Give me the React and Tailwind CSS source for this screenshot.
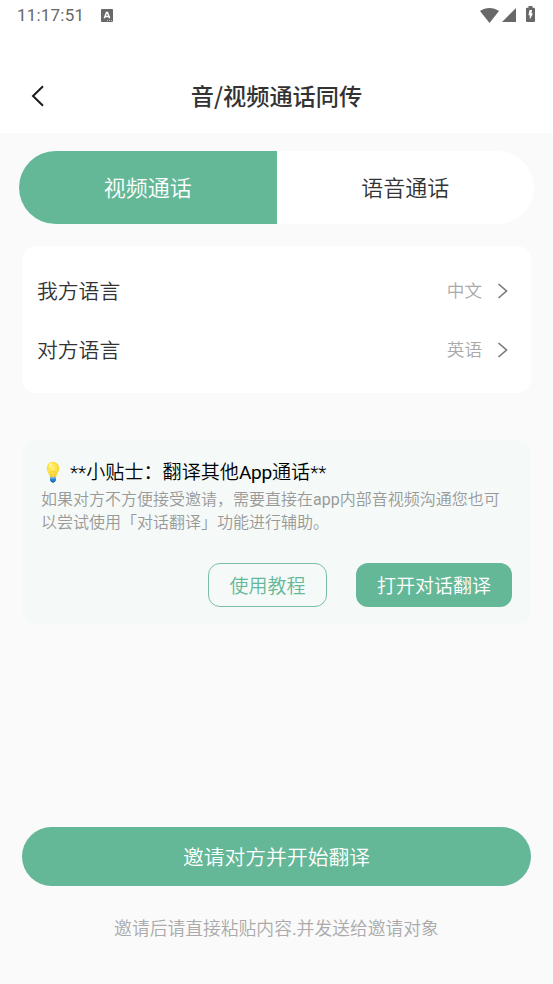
import React from 'react';

const languages = [
  { label: '我方语言', value: '中文' },
  { label: '对方语言', value: '英语' },
];

function StatusBar() {
  return (
    <div className="flex h-[30px] items-center pl-[17px] pr-[18px] font-normal text-[#686868]">
      <span className="w-[68px] text-[17px] leading-[30px] tracking-[0.2px]">11:17:51</span>
      <svg className="ml-4 h-[13px] w-3" viewBox="0 0 12 13">
        <rect width="12" height="13" rx="1" fill="currentColor" />
        <path d="M3.3 9.3 5.500 3.500h1L8.700 9.300M4.400 7.500h3.200" fill="none" stroke="#fff" strokeWidth="1.5" />
        <path d="M6 11.500h1M8 11.500h1M10 11.500h1" stroke="#fff" strokeWidth="0.6" />
      </svg>
      <svg className="ml-auto h-[15px] w-[19px]" viewBox="0 0 19 15" fill="currentColor">
        <path d="M0 3C5.6-1 13.4-1 19 3L9.5 15z" />
      </svg>
      <svg className="ml-[3px] h-3.5 w-3.5" viewBox="0 0 14 14" fill="currentColor">
        <path d="M14 0v14H0z" />
      </svg>
      <svg className="ml-[10px] mb-[2px] h-4 w-[9px]" viewBox="0 0 9 16">
        <path d="M2.5 0h4v1.7H8q1 0 1 1V15q0 1-1 1H1q-1 0-1-1V2.7q0-1 1-1h1.5z" fill="currentColor" />
        <path d="M3.500 4h2.500L5.500 7.500h1.500L3.800 13.500V9.300H2.500z" fill="#fff" />
      </svg>
    </div>
  );
}

function Bulb() {
  return (
    <svg className="h-[22px] w-3.5" viewBox="0 0 16 22" preserveAspectRatio="none">
      <defs>
        <radialGradient id="glass" cx="0.45" cy="0.4" r="0.65">
          <stop offset="0" stopColor="#fff28a" />
          <stop offset="0.55" stopColor="#ffe23c" />
          <stop offset="1" stopColor="#e9ca4b" />
        </radialGradient>
      </defs>
      <path d="M8 .7C3.7.7.9 3.7.9 7.6c0 3.2 2.400 4.600 3.300 7.900q.2 1 1.100 1h5.400q.9 0 1.100-1c.9-3.300 3.300-4.700 3.300-7.900C15.1 3.700 12.300.7 8 .7z" fill="url(#glass)" />
      <path d="M6.300 15.500 5.600 10l1.200.7L8 10l1.200.7 1.200-.7-.7 5.500" fill="none" stroke="#e8b92d" strokeWidth="0.5" />
      <path d="M4 5.500Q4.700 3.500 6.500 2.900" fill="none" stroke="#fffde0" strokeWidth="1.3" strokeLinecap="round" />
      <path d="M4.600 16.300h6.800v3.200q-1 2-3.400 2t-3.400-2z" fill="#2882d0" />
      <path d="M4.600 16.300h6.800v1.200H4.600z" fill="#82bce8" />
      <path d="M6 20.200h4q-.6 1.300-2 1.300t-2-1.300z" fill="#174e91" />
    </svg>
  );
}

export default function App() {
  return (
    <div className="flex h-[984px] w-[553px] flex-col bg-[#fafafa] font-['Roboto','Noto_Sans_CJK_SC',sans-serif] font-[350] text-[#333]">
      <header className="h-[133px] bg-white">
        <StatusBar />
        <div className="mt-[33px] grid h-[66px] grid-cols-[60px_1fr_60px] items-center">
          <svg className="ml-[31px] h-[22px] w-[14px]" viewBox="0 0 14 22" fill="none" stroke="#1c1c1c" strokeWidth="2">
            <path d="M12 1.300 2 11l10 9.700" />
          </svg>
          <h1 className="pb-px text-center font-['Noto_Sans_CJK_SC',sans-serif] text-[23.2px] font-medium">音/视频通话同传</h1>
        </div>
      </header>

      <div className="mx-[19px] mt-[18px] grid h-[73px] grid-cols-2 overflow-hidden rounded-full bg-white text-[22px]">
        <button className="bg-[#64b898] pt-0.5 text-white">视频通话</button>
        <button className="pt-0.5">语音通话</button>
      </div>

      <section className="mx-[22px] mt-[22px] h-[147px] rounded-[14px] bg-white pl-[15px] pr-[23px] pt-[15px]">
        {languages.map(item => (
          <div key={item.label} className="flex h-[59px] items-center">
            <span className="pt-[5px] text-[20.8px]">{item.label}</span>
            <span className="ml-auto pt-px text-[17.6px] text-[#aaa]">{item.value}</span>
            <svg className="ml-[15px] h-4 w-[11px]" viewBox="0 0 11 16" fill="none" stroke="#777" strokeWidth="1.6">
              <path d="m1.500 1 8 7-8 7" />
            </svg>
          </div>
        ))}
      </section>

      <section className="mx-[22px] mt-[47px] h-[185px] rounded-[14px] bg-[#f5faf8] px-[19px] pt-[18px]">
        <div className="flex h-[28px] items-center pl-[5px] text-[19.1px] text-black">
          <Bulb />
          <h2 className="ml-[10px] whitespace-nowrap pt-[3px]">
            **小贴士：翻译其他<span className="font-normal tracking-[-0.3px]">App</span>通话**
          </h2>
        </div>
        <p className="pt-0.5 text-[16px] leading-[23px] text-[#999]">
          如果对方不方便接受邀请，需要直接在<span className="font-normal">app</span>内部音视频沟通您也可
          <br />
          以尝试使用「对话翻译」功能进行辅助。
        </p>
        <div className="mt-[29px] flex justify-end gap-[29px] text-[19px]">
          <button className="h-[44px] w-[119px] rounded-xl border border-[#78bfa4] pt-[5px] text-[#64b898]">使用教程</button>
          <button className="h-[44px] w-[156px] rounded-xl bg-[#64b898] pt-[5px] text-white">打开对话翻译</button>
        </div>
      </section>

      <button className="mx-[22px] mt-[202px] h-[59px] rounded-full bg-[#64b898] pt-1 text-[20.8px] text-white">
        邀请对方并开始翻译
      </button>
      <p className="mt-[30px] text-center text-[17.8px] text-[#aaa]">
        邀请后请直接粘贴内容<span className="font-normal">.</span>并发送给邀请对象
      </p>
    </div>
  );
}
